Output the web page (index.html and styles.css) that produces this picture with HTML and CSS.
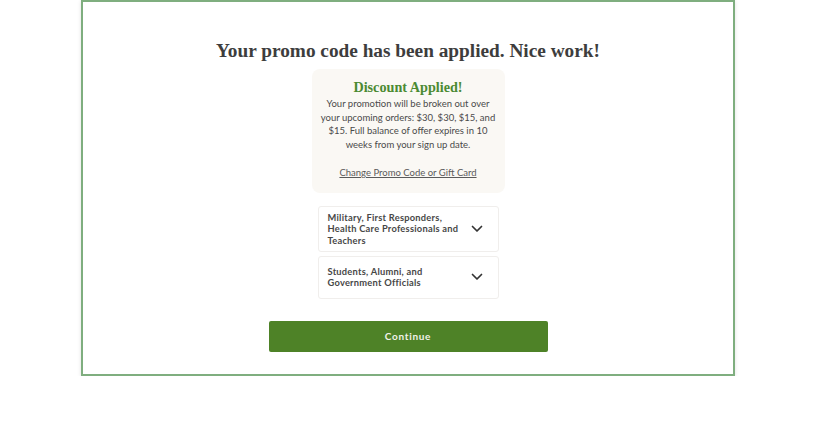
FILE: index.html
```html
<!DOCTYPE html>
<html lang="en">
<head>
<meta charset="utf-8">
<title>Promo applied</title>
<link rel="stylesheet" href="styles.css">
</head>
<body>
<main class="frame">
  <h1 class="title">Your promo code has been applied. Nice work!</h1>
  <section class="promo">
    <h2 class="promo-title">Discount Applied!</h2>
    <p class="promo-text">Your promotion will be broken out over your upcoming orders: $30, $30, $15, and $15. Full balance of offer expires in 10 weeks from your sign up date.</p>
    <a class="promo-link" href="#">Change Promo Code or Gift Card</a>
  </section>
  <div class="accordions">
    <div class="acc">
      <span class="acc-label">Military, First Responders, Health Care Professionals and Teachers</span>
      <svg class="chev" width="12" height="8" viewBox="0 0 12 8"><path d="M1.5 1.5 L6 6 L10.5 1.5" fill="none" stroke="#333" stroke-width="1.7" stroke-linecap="round" stroke-linejoin="round"/></svg>
    </div>
    <div class="acc">
      <span class="acc-label">Students, Alumni, and Government Officials</span>
      <svg class="chev" width="12" height="8" viewBox="0 0 12 8"><path d="M1.5 1.5 L6 6 L10.5 1.5" fill="none" stroke="#333" stroke-width="1.7" stroke-linecap="round" stroke-linejoin="round"/></svg>
    </div>
  </div>
  <button class="continue" type="button">Continue</button>
</main>
</body>
</html>
```

FILE: styles.css
```css
html, body {
  margin: 0;
  padding: 0;
  background: #ffffff;
}
body {
  font-family: "Lato", "Open Sans", sans-serif;
  color: #4a4a4a;
}
.frame {
  box-sizing: border-box;
  width: 654px;
  height: 376px;
  margin: 0 0 0 81px;
  border: 2px solid #7fae7f;
  box-shadow: 0 1px 4px rgba(0,0,0,0.12);
  display: flex;
  flex-direction: column;
  align-items: center;
  padding-top: 37px;
}
.title {
  margin: 0;
  font-family: "Liberation Serif", "DejaVu Serif", serif;
  font-weight: bold;
  font-size: 19.3px;
  line-height: 24px;
  color: #3d3d3d;
}
.promo {
  box-sizing: border-box;
  width: 193px;
  margin-top: 6px;
  background: #faf8f4;
  border-radius: 8px;
  padding: 8px 8px 14px;
  text-align: center;
}
.promo-title {
  margin: 0;
  font-family: "Liberation Serif", "DejaVu Serif", serif;
  font-weight: bold;
  font-size: 14.2px;
  line-height: 20px;
  color: #4b8a32;
}
.promo-text {
  margin: 0;
  font-size: 9.5px;
  line-height: 13.5px;
  color: #4a4a4a;
}
.promo-link {
  display: inline-block;
  margin-top: 16px;
  font-size: 9.5px;
  line-height: 12px;
  color: #5a5a5a;
  text-decoration: underline;
}
.accordions {
  margin-top: 13px;
  display: flex;
  flex-direction: column;
  gap: 4px;
}
.acc {
  box-sizing: border-box;
  width: 181px;
  min-height: 43px;
  background: #fff;
  border: 1px solid #f0eeec;
  border-radius: 3px;
  display: flex;
  align-items: center;
  justify-content: space-between;
  padding: 5px 15px 5px 9px;
}
.acc-label {
  width: 132px;
  font-size: 9.3px;
  line-height: 11.3px;
  font-weight: bold;
  letter-spacing: 0.25px;
  color: #474747;
}
.chev {
  flex: none;
}
.continue {
  margin-top: 22px;
  width: 279px;
  height: 31px;
  border: 0;
  border-radius: 2px;
  background: #4e8227;
  color: #f2f2ea;
  font-family: "Lato", "Open Sans", sans-serif;
  font-weight: bold;
  font-size: 10px;
  letter-spacing: 0.7px;
}
```
